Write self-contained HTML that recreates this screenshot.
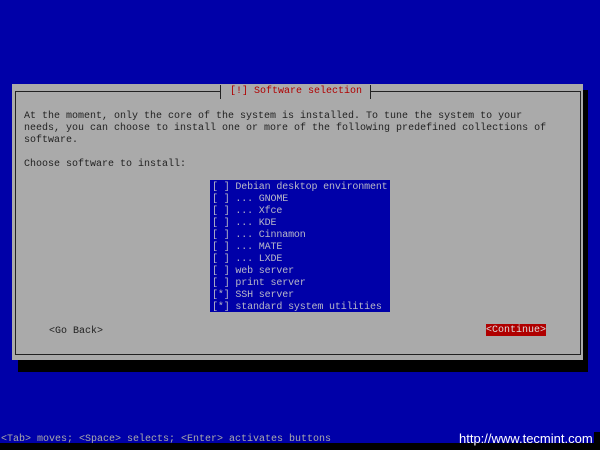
<!DOCTYPE html>
<html><head><style>
*{margin:0;padding:0}
body{width:600px;height:450px;background:#0000a8;position:relative;overflow:hidden;font-family:"Liberation Mono","DejaVu Sans Mono",monospace;font-size:10px;line-height:12px;color:#222}
.a{position:absolute;white-space:pre}
</style></head><body>
<div class="a" style="left:18px;top:90px;width:570px;height:282px;background:#000"></div>
<div class="a" style="left:12px;top:84px;width:571px;height:276px;background:#aaa"></div>
<div class="a" style="left:15px;top:91px;width:564px;height:262px;border:1px solid #222"></div>
<div class="a" style="left:220px;top:85px;width:149px;height:14px;background:#aaa;border-left:1px solid #222;border-right:1px solid #222"></div>
<div class="a" style="left:230px;top:86px;color:#b00000">[!] Software selection</div>
<div class="a" style="left:24px;top:111px">At the moment, only the core of the system is installed. To tune the system to your
needs, you can choose to install one or more of the following predefined collections of
software.

Choose software to install:</div>
<div class="a" style="left:210px;top:180px;width:180px;height:132px;background:#0000a8;color:#b8b8c8;padding:2px 0 0 2px;box-sizing:border-box;overflow:hidden;letter-spacing:-0.15px">[ ] Debian desktop environment
[ ] ... GNOME
[ ] ... Xfce
[ ] ... KDE
[ ] ... Cinnamon
[ ] ... MATE
[ ] ... LXDE
[ ] web server
[ ] print server
[*] SSH server
[*] standard system utilities</div>
<div class="a" style="left:49px;top:326px">&lt;Go Back&gt;</div>
<div class="a" style="left:486px;top:324px;width:60px;height:12px;background:#b00000;color:#ddd;padding-top:1px;box-sizing:border-box">&lt;Continue&gt;</div>
<div class="a" style="left:1px;top:434px;color:#aaa">&lt;Tab&gt; moves; &lt;Space&gt; selects; &lt;Enter&gt; activates buttons</div>
<div class="a" style="left:0;top:443px;width:600px;height:7px;background:#000"></div>
<div class="a" style="left:594px;top:432px;width:6px;height:18px;background:#000"></div>
<div class="a" style="left:459px;top:431px;font-family:'Liberation Sans',sans-serif;font-size:13px;line-height:16px;color:#fff">http://www.tecmint.com</div>
</body></html>
